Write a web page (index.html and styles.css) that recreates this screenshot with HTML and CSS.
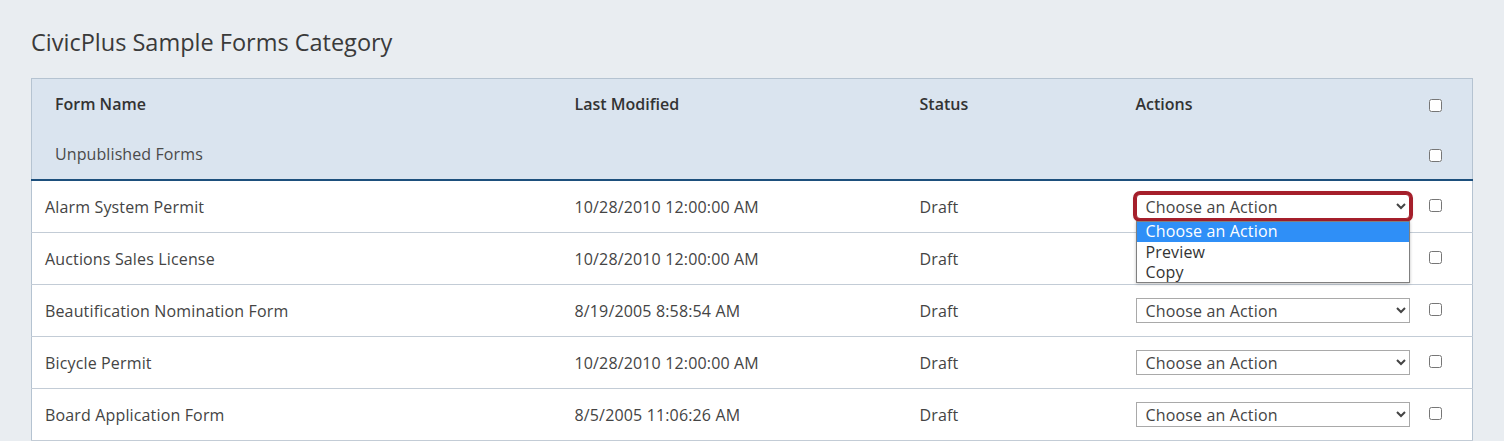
FILE: index.html
```html
<!DOCTYPE html>
<html lang="en">
<head>
<meta charset="utf-8">
<title>CivicPlus Sample Forms Category</title>
<link rel="stylesheet" href="styles.css">
</head>
<body>
<div class="page">
  <h1 class="title">CivicPlus Sample Forms Category</h1>
  <table class="forms">
    <colgroup>
      <col class="c-name"><col class="c-mod"><col class="c-status"><col class="c-act"><col class="c-chk">
    </colgroup>
    <thead>
      <tr class="hrow">
        <th class="first">Form Name</th>
        <th>Last Modified</th>
        <th>Status</th>
        <th>Actions</th>
        <th><input type="checkbox"></th>
      </tr>
      <tr class="hrow sub">
        <th class="first sublabel">Unpublished Forms</th>
        <th></th><th></th><th></th>
        <th><input type="checkbox"></th>
      </tr>
    </thead>
    <tbody>
      <tr>
        <td>Alarm System Permit</td>
        <td>10/28/2010 12:00:00 AM</td>
        <td>Draft</td>
        <td>
          <div class="selwrap">
            <select class="action focused"><option>Choose an Action</option><option>Preview</option><option>Copy</option></select>
            <div class="menu">
              <div class="opt hl">Choose an Action</div>
              <div class="opt">Preview</div>
              <div class="opt">Copy</div>
            </div>
          </div>
        </td>
        <td><input type="checkbox"></td>
      </tr>
      <tr>
        <td>Auctions Sales License</td>
        <td>10/28/2010 12:00:00 AM</td>
        <td>Draft</td>
        <td><select class="action"><option>Choose an Action</option><option>Preview</option><option>Copy</option></select></td>
        <td><input type="checkbox"></td>
      </tr>
      <tr>
        <td>Beautification Nomination Form</td>
        <td>8/19/2005 8:58:54 AM</td>
        <td>Draft</td>
        <td><select class="action"><option>Choose an Action</option><option>Preview</option><option>Copy</option></select></td>
        <td><input type="checkbox"></td>
      </tr>
      <tr>
        <td>Bicycle Permit</td>
        <td>10/28/2010 12:00:00 AM</td>
        <td>Draft</td>
        <td><select class="action"><option>Choose an Action</option><option>Preview</option><option>Copy</option></select></td>
        <td><input type="checkbox"></td>
      </tr>
      <tr>
        <td>Board Application Form</td>
        <td>8/5/2005 11:06:26 AM</td>
        <td>Draft</td>
        <td><select class="action"><option>Choose an Action</option><option>Preview</option><option>Copy</option></select></td>
        <td><input type="checkbox"></td>
      </tr>
    </tbody>
  </table>
</div>
</body>
</html>
```

FILE: styles.css
```css
html, body {
  margin: 0;
  padding: 0;
  background: #e9edf1;
}
body {
  font-family: "Open Sans", "Lato", sans-serif;
  color: #444;
  overflow: hidden;
}
.page {
  padding: 29px 32px 0 31px;
}
.title {
  margin: 0 0 23px 0;
  font-size: 23.5px;
  font-weight: 400;
  line-height: 26px;
  color: #3a3a3a;
}
.forms {
  width: 1441px;
  border-collapse: collapse;
  table-layout: fixed;
  background: #fff;
  border: 1px solid #b5c3d1;
  font-size: 16px;
  letter-spacing: 0.15px;
}
.c-name { width: 530px; }
.c-mod { width: 345px; }
.c-status { width: 216px; }
.c-act { width: 289px; }
.c-chk { width: 61px; }

.forms th {
  background: #dae4ef;
  text-align: left;
  font-weight: 600;
  color: #333;
  height: 50px;
  padding: 0 0 0 13px;
  vertical-align: middle;
  letter-spacing: 0;
}
.forms th.first { padding-left: 23px; }
.forms th.sublabel { font-weight: 400; color: #4a4a4a; letter-spacing: 0.1px; }
.forms thead tr.sub th { border-bottom: 2px solid #1d4f7c; }
.forms td {
  height: 51px;
  padding: 0 0 0 13px;
  border-bottom: 1px solid #c3ccd6;
  vertical-align: middle;
  color: #444;
}
.forms input[type="checkbox"] {
  width: 13px;
  height: 13px;
  margin: 0 0 0 4px;
  vertical-align: middle;
}
.forms td input[type="checkbox"] {
  margin-bottom: 6px;
}
.action {
  width: 274px;
  height: 25px;
  font-family: inherit;
  font-size: 16px;
  letter-spacing: 0.15px;
  color: #444;
  background: #fff;
  border: 1px solid #a9a9a9;
  padding: 0 0 0 5px;
  vertical-align: middle;
}
.selwrap {
  position: relative;
  width: 274px;
  height: 25px;
}
.action.focused {
  outline: 3px solid #a51f2b;
  outline-offset: 0;
  border-radius: 4px;
  border-color: #a51f2b;
  box-shadow: 0 0 0 1px #a51f2b, 0 1px 4px 1px rgba(0,0,0,0.2);
}
.menu {
  position: absolute;
  left: 0;
  top: 27px;
  width: 272px;
  background: #fff;
  border: 1px solid #808080;
  box-shadow: 0 1px 3px rgba(0,0,0,0.25);
  z-index: 5;
}
.opt {
  height: 20px;
  line-height: 20px;
  padding-left: 9px;
  font-size: 16px;
  letter-spacing: 0.15px;
  color: #333;
}
.opt.hl {
  background: #2f8ff7;
  color: #fff;
  height: 20px;
  line-height: 19px;
}
```
